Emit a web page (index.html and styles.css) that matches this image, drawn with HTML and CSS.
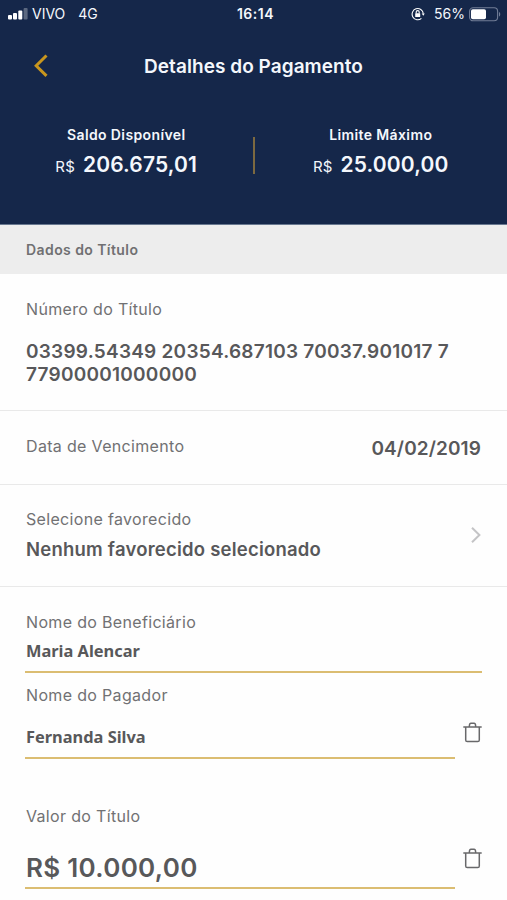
FILE: index.html
```html
<!DOCTYPE html>
<html lang="pt-BR">

<head>
    <title>Detalhes do Pagamento</title>
    <meta charset="utf-8">
    <meta name="viewport" content="width=device-width, initial-scale=1">
    <link rel="stylesheet" href="styles.css">
</head>

<body>
    <header>
        <div class="status">
            <div class="status-left">
                <svg class="signal" width="20" height="12" viewBox="0 0 20 12" fill="#fff">
                    <rect x="0" y="7" width="4" height="4.5" rx="1" />
                    <rect x="5" y="5" width="4" height="6.5" rx="1" />
                    <rect x="10.3" y="2.5" width="4" height="9" rx="1" />
                    <rect x="15.6" y="0" width="4" height="11.5" rx="1" opacity=".3" />
                </svg>
                <span class="carrier">VIVO</span>
                <span class="network">4G</span>
            </div>
            <span class="time">16:14</span>
            <div class="status-right">
                <svg width="14" height="14" viewBox="0 0 14 14" fill="none" stroke="#fff" stroke-width="1.1">
                    <path d="M10.4 11.4A5.6 5.6 0 1 1 12.3 6.6" />
                    <path d="M10.7 6.6h3.1l-1.5 2.2z" fill="#fff" stroke="none" />
                    <rect x="4.2" y="6.2" width="5" height="3.8" rx=".6" fill="#fff" stroke="none" />
                    <path d="M5.2 6.5V5.1a1.5 1.5 0 0 1 3 0v1.4" />
                </svg>
                <span class="percent">56%</span>
                <svg width="32" height="15" viewBox="0 0 32 15">
                    <rect x=".6" y=".8" width="28" height="13" rx="3.5" fill="none" stroke="#717d97" stroke-width="1.1" />
                    <rect x="2" y="2.3" width="15" height="10" rx="1.8" fill="#fff" />
                    <path d="M30 5v4.6c1.7-.7 1.7-3.9 0-4.6z" fill="#717d97" />
                </svg>
            </div>
        </div>

        <nav>
            <a class="back" href="#" aria-label="Voltar">
                <svg width="16" height="24" viewBox="0 0 16 24" fill="none" stroke="#c8961e" stroke-width="3">
                    <path d="M13.5 1.5L3.2 11.7l10.3 10.2" />
                </svg>
            </a>
            <h1>Detalhes do Pagamento</h1>
        </nav>

        <div class="balances">
            <div class="balance">
                <p class="balance-label">Saldo Disponível</p>
                <p class="balance-value"><small>R$</small><span>206.675,01</span></p>
            </div>
            <div class="divider"></div>
            <div class="balance">
                <p class="balance-label">Limite Máximo</p>
                <p class="balance-value"><small>R$</small><span>25.000,00</span></p>
            </div>
        </div>
    </header>

    <h2>Dados do Título</h2>

    <section class="row number">
        <p class="label">Número do Título</p>
        <p class="digits">03399.54349 20354.687103 70037.901017 7<br>77900001000000</p>
    </section>

    <section class="row due">
        <p class="label">Data de Vencimento</p>
        <p class="date">04/02/2019</p>
    </section>

    <section class="row favorite">
        <div>
            <p class="label">Selecione favorecido</p>
            <p class="selected">Nenhum favorecido selecionado</p>
        </div>
        <svg width="10" height="16" viewBox="0 0 10 16" fill="none" stroke="#c4c4c6" stroke-width="2">
            <path d="M1 .8L8.4 8 1 15.2" />
        </svg>
    </section>

    <form>
        <div class="field beneficiary">
            <p class="label">Nome do Beneficiário</p>
            <p class="name">Maria Alencar</p>
        </div>

        <div class="line payer">
            <div class="field">
                <p class="label">Nome do Pagador</p>
                <p class="name">Fernanda Silva</p>
            </div>
            <svg class="trash" width="19" height="21" viewBox="0 0 19 21" fill="none" stroke="#68686a" stroke-width="1.5">
                <path d="M.3 5h18.4M6.2 5l.4-2.6q.2-1.1 1.2-1.1h3.4q1 0 1.2 1.1l.4 2.6M2.7 5v13q0 1.6 1.6 1.6h10.4q1.6 0 1.6-1.6V5" />
            </svg>
        </div>

        <div class="line amount">
            <div class="field">
                <p class="label">Valor do Título</p>
                <p class="value">R$ 10.000,00</p>
            </div>
            <svg class="trash" width="19" height="21" viewBox="0 0 19 21" fill="none" stroke="#68686a" stroke-width="1.5">
                <path d="M.3 5h18.4M6.2 5l.4-2.6q.2-1.1 1.2-1.1h3.4q1 0 1.2 1.1l.4 2.6M2.7 5v13q0 1.6 1.6 1.6h10.4q1.6 0 1.6-1.6V5" />
            </svg>
        </div>
    </form>
</body>

</html>
```
FILE: styles.css
```css
* {
    box-sizing: border-box;
}

body {
    margin: 0;
    height: 900px;
    overflow: hidden;
    font-family: Inter, "Liberation Sans", sans-serif;
    background: #fefefe;
    color: #58585a;
}

h1,
h2,
p {
    margin: 0;
    white-space: nowrap;
}

svg {
    display: block;
    flex: none;
}

/* Blue header */
header {
    height: 225px;
    background: #15274a;
    border-bottom: 1px solid #687890;
    color: #f4f7fc;
}

/* Phone status bar */
.status {
    display: grid;
    grid-template-columns: 1fr auto 1fr;
    align-items: center;
    height: 28px;
    padding: 0 6px 0 8px;
    font-size: 14px;
    line-height: 28px;
}

.status-left,
.status-right {
    display: flex;
    align-items: center;
}

.status-right {
    justify-content: flex-end;
}

.carrier {
    margin-left: 4px;
}

.network {
    margin-left: 13px;
}

.time {
    padding-left: 2px;
    font-weight: 600;
    letter-spacing: 0.5px;
}

.percent {
    margin: 0 4px 0 9px;
}

/* Title bar */
nav {
    display: grid;
    grid-template-columns: 50px 1fr 50px;
    align-items: center;
    height: 76px;
}

.back {
    padding-left: 33px;
}

h1 {
    padding-top: 1px;
    font-size: 19px;
    font-weight: 600;
    letter-spacing: 0.05px;
    text-align: center;
}

/* Balances */
.balances {
    display: flex;
    padding-top: 22px;
}

.balance {
    flex: 1;
    text-align: center;
}

.balance-label {
    font-size: 14px;
    font-weight: 600;
    line-height: 18px;
    letter-spacing: 0.38px;
}

.balance-value {
    margin-top: 6px;
    font-size: 21px;
    font-weight: 600;
    line-height: 30px;
    letter-spacing: 0.15px;
}

.balance-value small {
    margin-right: 8px;
    font-size: 15px;
    font-weight: 400;
}

.divider {
    width: 2px;
    height: 37px;
    margin-top: 11px;
    background: #7c6940;
}

/* Grey section title */
h2 {
    height: 49px;
    padding-left: 26px;
    background: #ededed;
    color: #707072;
    font-size: 14px;
    font-weight: 600;
    line-height: 49px;
    letter-spacing: 0.42px;
}

.label {
    color: #717173;
    font-size: 16px;
    line-height: 20px;
    letter-spacing: 0.33px;
}

/* Rows */
.row {
    padding: 0 26px;
    border-bottom: 1px solid #e9e9e9;
}

.number {
    height: 137px;
    padding-top: 25px;
}

.digits {
    margin-top: 21px;
    font-size: 19px;
    font-weight: 600;
    line-height: 23px;
    letter-spacing: 0.24px;
}

.due,
.favorite {
    display: flex;
    align-items: center;
    justify-content: space-between;
}

.due {
    height: 74px;
}

.due .label {
    padding-bottom: 3px;
}

.date {
    padding-top: 2px;
    font-size: 19px;
    font-weight: 600;
    letter-spacing: 0.1px;
}

.favorite {
    height: 102px;
    padding-bottom: 2px;
}

.selected {
    margin-top: 9px;
    font-size: 18.5px;
    font-weight: 600;
    line-height: 22px;
    letter-spacing: 0.22px;
}

/* Form fields with gold underline */
form {
    padding: 25px 25px 0;
}

.field {
    border-bottom: 2px solid #dbbd72;
    padding-left: 1px;
}

.beneficiary {
    height: 61px;
}

.name {
    font-family: "Noto Sans", "Open Sans", sans-serif;
    font-size: 16.4px;
    font-weight: 700;
    line-height: 24px;
}

.beneficiary .name {
    margin-top: 7px;
}

.line {
    display: flex;
    justify-content: space-between;
}

.line .field {
    width: 430px;
}

.payer {
    margin-top: 12px;
}

.payer .field {
    height: 74px;
}

.payer .name {
    margin-top: 20px;
}

.amount {
    margin-top: 47px;
}

.amount .field {
    height: 83px;
}

.value {
    margin-top: 25px;
    font-size: 26px;
    font-weight: 600;
    line-height: 34px;
    letter-spacing: 0.3px;
}

.trash {
    margin-top: 37px;
}

.amount .trash {
    margin-top: 42px;
}
```
